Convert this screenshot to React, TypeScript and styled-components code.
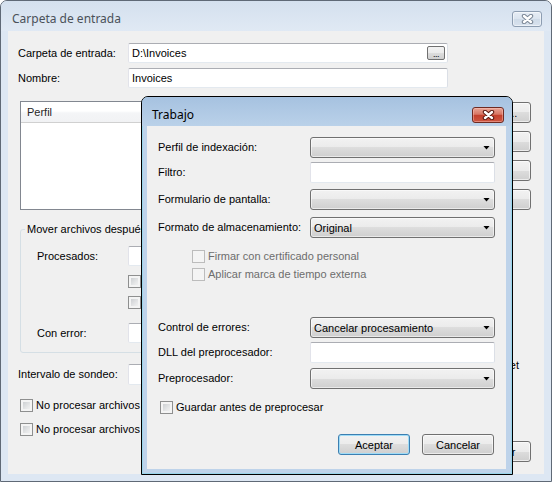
import styled, { createGlobalStyle } from "styled-components";

const GlobalStyle = createGlobalStyle`
  html, body {
    margin: 0;
    padding: 0;
  }
  body {
    background: #ffffff;
    font-family: "Liberation Sans", Arial, sans-serif;
    font-size: 11px;
    color: #000;
  }
`;

const Window = styled.div`
  position: relative;
  width: 552px;
  height: 482px;
  box-sizing: border-box;
  border: 1px solid #5f6976;
  border-radius: 7px 7px 0 0;
  background: #dde7f3;
  display: flex;
  flex-direction: column;
  overflow: hidden;
`;

const TitleBar = styled.div<{ $active?: boolean }>`
  flex: none;
  height: ${(p) => (p.$active ? 29 : 30)}px;
  display: flex;
  align-items: flex-start;
  padding-left: ${(p) => (p.$active ? 10 : 11)}px;
  background: ${(p) =>
    p.$active
      ? "linear-gradient(#a6c2e0, #bad1e9)"
      : "linear-gradient(#d4e0ee, #e0e9f4)"};
`;

const Caption = styled.span<{ $active?: boolean }>`
  margin-top: 10px;
  line-height: 16px;
  font-family: "Noto Sans", "Open Sans", sans-serif;
  font-size: 12px;
  color: ${(p) => (p.$active ? "#000" : "#4a5159")};
`;

const CloseButton = styled.div<{ $active?: boolean }>`
  margin: 10px ${(p) => (p.$active ? 8 : 9)}px 0 auto;
  width: ${(p) => (p.$active ? 32 : 30)}px;
  height: 16px;
  box-sizing: border-box;
  border-radius: 3px;
  display: flex;
  align-items: center;
  justify-content: center;
  border: 1px solid ${(p) => (p.$active ? "#6f2b22" : "#8d9db1")};
  background: ${(p) =>
    p.$active
      ? "linear-gradient(#e8a596 0%, #d87664 45%, #c4402d 52%, #cd5641 100%)"
      : "linear-gradient(#e6edf5 0%, #dbe4ef 50%, #cfdbe8 52%, #d8e2ee 100%)"};
  box-shadow: inset 0 0 0 1px ${(p) => (p.$active ? "rgba(255,200,190,0.45)" : "rgba(255,255,255,0.5)")};
`;

const XIcon = ({ edge }: { edge: string }) => (
  <svg width="13" height="10" viewBox="0 0 13 10">
    <path d="M3 2 L10 8 M10 2 L3 8" stroke={edge} strokeWidth="4.4" strokeLinecap="round" fill="none" />
    <path d="M3 2 L10 8 M10 2 L3 8" stroke="#fff" strokeWidth="2.4" strokeLinecap="round" fill="none" />
  </svg>
);

const Frame = styled.div`
  flex: 1;
  display: flex;
  padding: 0 7px 7px;
`;

const Client = styled.div`
  flex: 1;
  background: #f0f0f0;
  padding: 12px 13px 0 10px;
  display: flex;
  flex-direction: column;
`;

const Row = styled.div<{ $mt?: number; $cols: string; $indent?: number }>`
  display: grid;
  grid-template-columns: ${(p) => p.$cols};
  align-items: center;
  margin-top: ${(p) => p.$mt ?? 0}px;
  padding-left: ${(p) => p.$indent ?? 0}px;
`;

const Label = styled.span<{ $disabled?: boolean; $clip?: number }>`
  white-space: nowrap;
  line-height: 13px;
  color: ${(p) => (p.$disabled ? "#6d6d6d" : "#000")};
  ${(p) => (p.$clip ? `max-width: ${p.$clip}px; overflow: hidden;` : "")}
`;

const TextBox = styled.div<{ $h?: number; $w?: number }>`
  height: ${(p) => p.$h ?? 20}px;
  width: ${(p) => (p.$w ? `${p.$w}px` : "auto")};
  box-sizing: border-box;
  background: #fff;
  border: 1px solid;
  border-color: #abadb3 #dbdfe6 #e3e9ef #e2e3ea;
  border-radius: 2px;
  display: flex;
  align-items: center;
  padding: 0 2px 0 3px;
  white-space: nowrap;
  overflow: hidden;
`;

const BrowseButton = styled.span`
  margin-left: auto;
  width: 18px;
  height: 14px;
  box-sizing: border-box;
  border: 1px solid #707070;
  border-radius: 2px;
  background: linear-gradient(#f2f2f2 0%, #ebebeb 50%, #dddddd 50%, #cfcfcf 100%);
  display: flex;
  align-items: flex-end;
  justify-content: center;
  font-size: 9px;
  line-height: 10px;
  letter-spacing: -0.5px;
`;

const Combo = styled.div`
  height: 21px;
  box-sizing: border-box;
  border: 1px solid #707070;
  border-radius: 3px;
  background: linear-gradient(#f2f2f2 0%, #ebebeb 50%, #dddddd 50%, #cfcfcf 100%);
  box-shadow: inset 0 0 0 1px rgba(255, 255, 255, 0.55);
  display: flex;
  align-items: center;
  padding: 0 4px 0 3px;
  white-space: nowrap;
  &::after {
    content: "";
    margin-left: auto;
    width: 7px;
    height: 4px;
    background: #000;
    clip-path: polygon(0 0, 100% 0, 50% 100%);
  }
`;

const Button = styled.button<{ $w: number; $default?: boolean }>`
  width: ${(p) => p.$w}px;
  height: 21px;
  box-sizing: border-box;
  padding: 0;
  font: inherit;
  color: #000;
  border: 1px solid ${(p) => (p.$default ? "#3c7fb1" : "#707070")};
  border-radius: 3px;
  background: linear-gradient(#f2f2f2 0%, #ebebeb 50%, #dddddd 50%, #cfcfcf 100%);
  box-shadow: inset 0 0 0 1px
    ${(p) => (p.$default ? "#9fdcf7" : "rgba(255, 255, 255, 0.6)")};
  white-space: nowrap;
`;

const Middle = styled.div`
  display: flex;
  align-items: flex-start;
  margin-top: 13px;
  padding-left: 2px;
`;

const ListView = styled.div`
  width: 428px;
  height: 109px;
  box-sizing: border-box;
  border: 1px solid #828790;
  background: #fff;
`;

const ListHeader = styled.div`
  height: 21px;
  box-sizing: border-box;
  border-bottom: 1px solid #d0d0d0;
  background: linear-gradient(#ffffff 0%, #ffffff 45%, #f4f5f7 55%, #f1f2f4 100%);
  padding-left: 6px;
  display: flex;
  align-items: center;
  color: #262626;
`;

const SideButtons = styled.div`
  display: flex;
  flex-direction: column;
  gap: 8px;
  margin-left: 8px;
  padding-top: 1px;
`;

const Group = styled.fieldset`
  margin: 13px 0 0 2px;
  padding: 0 0 9px 4px;
  width: 428px;
  box-sizing: border-box;
  min-width: 0;
  border: 1px solid #d5dfe5;
  border-radius: 3px;
`;

const Legend = styled.legend`
  padding: 0 2px;
  line-height: 13px;
  max-width: 114px;
  overflow: hidden;
  white-space: nowrap;
`;

const CheckLine = styled.div<{ $mt?: number; $indent?: number }>`
  display: flex;
  align-items: center;
  gap: 3px;
  height: 13px;
  margin-top: ${(p) => p.$mt ?? 0}px;
  padding-left: ${(p) => p.$indent ?? 0}px;
  white-space: nowrap;
`;

const Box = styled.span<{ $disabled?: boolean }>`
  flex: none;
  width: 13px;
  height: 13px;
  box-sizing: border-box;
  border: 1px solid ${(p) => (p.$disabled ? "#bcbcbc" : "#8e8f8f")};
  background: ${(p) =>
    p.$disabled
      ? "#f4f4f4"
      : "linear-gradient(135deg, #c3c6ca 0%, #e6e7e8 60%, #f8f8f8 100%)"};
  box-shadow: inset 0 0 0 2px #f4f4f4;
`;

const IntervalRow = styled.div`
  display: flex;
  align-items: flex-start;
  margin-top: 11px;
`;

const IntervalLabel = styled.span`
  width: 110px;
  line-height: 21px;
  white-space: nowrap;
`;

const SideNote = styled.span`
  margin: -5px 12px 0 auto;
  line-height: 13px;
  white-space: nowrap;
`;

const Footer = styled.div<{ $mt: number; $gap: number; $right?: number }>`
  display: flex;
  justify-content: flex-end;
  gap: ${(p) => p.$gap}px;
  margin-top: ${(p) => p.$mt}px;
  padding-right: ${(p) => p.$right ?? 0}px;
`;

const Dialog = styled.div`
  position: absolute;
  left: 140px;
  top: 95px;
  width: 372px;
  height: 379px;
  box-sizing: border-box;
  border: 1px solid #000;
  border-radius: 7px 7px 0 0;
  background: #bed3ea;
  box-shadow: inset 0 0 0 1px rgba(120, 215, 235, 0.55);
  display: flex;
  flex-direction: column;
  overflow: hidden;
`;

const DialogFrame = styled.div`
  flex: 1;
  display: flex;
  padding: 0 6px 5px 5px;
`;

const DialogClient = styled.div`
  flex: 1;
  background: #f0f0f0;
  padding: 11px 0 0 11px;
  display: flex;
  flex-direction: column;
`;

const Check = ({
  text,
  disabled,
  mt,
  indent,
  clip,
}: {
  text?: string;
  disabled?: boolean;
  mt?: number;
  indent?: number;
  clip?: number;
}) => (
  <CheckLine $mt={mt} $indent={indent}>
    <Box $disabled={disabled} />
    {text && (
      <Label $disabled={disabled} $clip={clip}>
        {text}
      </Label>
    )}
  </CheckLine>
);

const FIELDS = "152px 185px";

export default function App() {
  return (
    <>
      <GlobalStyle />
      <Window>
        <TitleBar>
          <Caption>Carpeta de entrada</Caption>
          <CloseButton>
            <XIcon edge="#7b8796" />
          </CloseButton>
        </TitleBar>
        <Frame>
          <Client>
            <Row $cols="110px 320px">
              <Label>Carpeta de entrada:</Label>
              <TextBox>
                <span>D:\Invoices</span>
                <BrowseButton>...</BrowseButton>
              </TextBox>
            </Row>
            <Row $mt={5} $cols="110px 320px">
              <Label>Nombre:</Label>
              <TextBox>Invoices</TextBox>
            </Row>
            <Middle>
              <ListView>
                <ListHeader>Perfil</ListHeader>
              </ListView>
              <SideButtons>
                <Button $w={75}>Agregar...</Button>
                <Button $w={75}>Quitar</Button>
                <Button $w={75}>Subir</Button>
                <Button $w={75}>Bajar</Button>
              </SideButtons>
            </Middle>
            <Group>
              <Legend>Mover archivos después de procesar</Legend>
              <Row $mt={10} $cols="91px 280px" $indent={12}>
                <Label>Procesados:</Label>
                <TextBox />
              </Row>
              <Check mt={9} indent={103} />
              <Check mt={8} indent={103} />
              <Row $mt={14} $cols="91px 280px" $indent={12}>
                <Label>Con error:</Label>
                <TextBox />
              </Row>
            </Group>
            <IntervalRow>
              <IntervalLabel>Intervalo de sondeo:</IntervalLabel>
              <TextBox $h={21} $w={60} />
              <SideNote>Usar la hora de Internet</SideNote>
            </IntervalRow>
            <Check mt={14} indent={2} clip={106} text="No procesar archivos sin modificar" />
            <Check mt={11} indent={2} clip={106} text="No procesar archivos recientes" />
            <Footer $mt={5} $gap={6}>
              <Button $w={75}>Aceptar</Button>
              <Button $w={75}>Cancelar</Button>
            </Footer>
          </Client>
        </Frame>

        <Dialog>
          <TitleBar $active>
            <Caption $active>Trabajo</Caption>
            <CloseButton $active>
              <XIcon edge="#5a1a12" />
            </CloseButton>
          </TitleBar>
          <DialogFrame>
            <DialogClient>
              <Row $mt={0} $cols={FIELDS}>
                <Label>Perfil de indexación:</Label>
                <Combo />
              </Row>
              <Row $mt={4} $cols={FIELDS}>
                <Label>Filtro:</Label>
                <TextBox $h={21} />
              </Row>
              <Row $mt={6} $cols={FIELDS}>
                <Label>Formulario de pantalla:</Label>
                <Combo />
              </Row>
              <Row $mt={7} $cols={FIELDS}>
                <Label>Formato de almacenamiento:</Label>
                <Combo>Original</Combo>
              </Row>
              <Check mt={12} indent={34} disabled text="Firmar con certificado personal" />
              <Check mt={5} indent={34} disabled text="Aplicar marca de tiempo externa" />
              <Row $mt={36} $cols={FIELDS}>
                <Label>Control de errores:</Label>
                <Combo>Cancelar procesamiento</Combo>
              </Row>
              <Row $mt={4} $cols={FIELDS}>
                <Label>DLL del preprocesador:</Label>
                <TextBox $h={21} />
              </Row>
              <Row $mt={5} $cols={FIELDS}>
                <Label>Preprocesador:</Label>
                <Combo />
              </Row>
              <Check mt={12} indent={2} text="Guardar antes de preprocesar" />
              <Footer $mt={20} $gap={12} $right={12}>
                <Button $w={72} $default>
                  Aceptar
                </Button>
                <Button $w={72}>Cancelar</Button>
              </Footer>
            </DialogClient>
          </DialogFrame>
        </Dialog>
      </Window>
    </>
  );
}
